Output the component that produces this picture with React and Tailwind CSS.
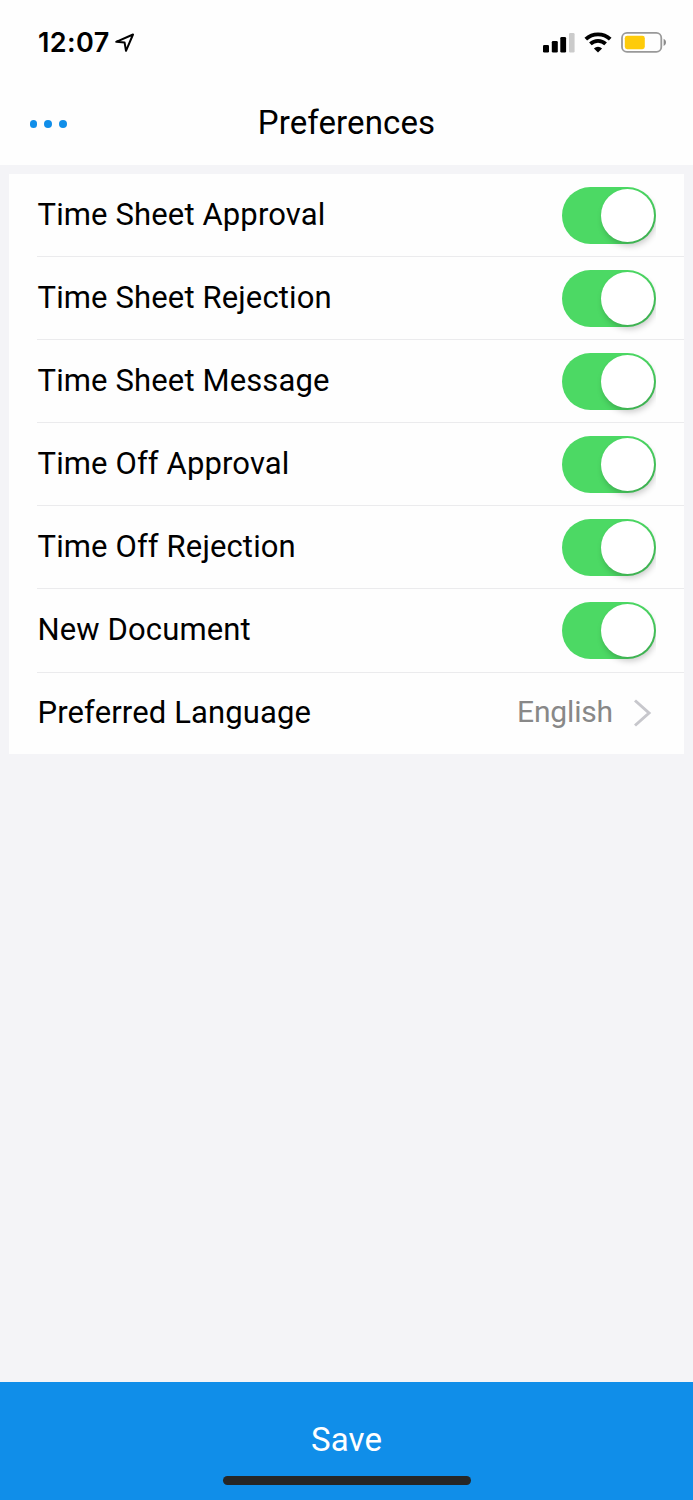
const toggles = [
  'Time Sheet Approval',
  'Time Sheet Rejection',
  'Time Sheet Message',
  'Time Off Approval',
  'Time Off Rejection',
  'New Document',
];

function StatusBar() {
  return (
    <div className="flex h-[84px] items-start justify-between pl-[38px] pr-[26px]">
      <div className="flex items-center pt-[26px]">
        <span className="w-[72px] whitespace-nowrap font-['Inter',sans-serif] text-[27px] leading-[34px] font-semibold tracking-[0.4px]">12:07</span>
        <svg className="ml-[5px]" width="21" height="21" viewBox="0 0 21 21" fill="none" stroke="#000" strokeWidth="2" strokeLinejoin="round">
          <path d="M1.2 8.8 18 1.5 11 17.8 9.6 9.6Z" />
        </svg>
      </div>
      <div className="flex items-center pt-[31px]">
        <svg width="32" height="22" viewBox="0 0 32 22">
          <rect x="0" y="14" width="6" height="7.5" rx="1.3" />
          <rect x="8.8" y="10" width="6" height="11.5" rx="1.3" />
          <rect x="17.3" y="6" width="5.8" height="15.5" rx="1.3" />
          <rect x="26" y="2" width="5.6" height="19.5" rx="1.3" fill="#cbcbcb" />
        </svg>
        <svg className="ml-[9px]" width="28" height="22" viewBox="0 0 28 22" fill="none" stroke="#000" strokeWidth="3.8">
          <path d="M1.8 8.2a17.6 17.6 0 0 1 24.4 0" />
          <path d="M6.4 12.9a11 11 0 0 1 15.2 0" />
          <path d="M14 21.6 9.9 17.4a6 6 0 0 1 8.2 0Z" fill="#000" stroke="none" />
        </svg>
        <svg className="ml-[9px]" width="46" height="22" viewBox="0 0 46 22">
          <rect x="1" y="1.9" width="39.3" height="19" rx="5" fill="none" stroke="#999" strokeWidth="1.8" />
          <rect x="3.8" y="4.8" width="20" height="13.4" rx="2.4" fill="#fecb0a" />
          <path d="M42.6 7.8c3.2 1.4 3.2 5.8 0 7.2Z" fill="#8c8c8c" />
        </svg>
      </div>
    </div>
  );
}

function Toggle() {
  return (
    <button aria-label="Toggle" className="flex h-[66px] w-[94.5px] items-start overflow-hidden">
      <span className="flex h-[57px] w-[94.5px] items-center justify-end rounded-full bg-[#4cd964] pr-[2px]">
        <span className="size-[53px] rounded-full bg-white shadow-[2px_4px_6px_rgba(0,0,0,0.21)]" />
      </span>
    </button>
  );
}

export default function App() {
  return (
    <div className="flex h-[1500px] w-[693px] flex-col bg-[#f4f4f7] font-['Roboto',sans-serif] text-black">
      <header className="h-[165px] bg-[#fefefe]">
        <StatusBar />
        <div className="grid h-[80px] grid-cols-[1fr_auto_1fr] items-center">
          <div className="flex gap-[7px] pl-[29.5px]">
            <span className="size-[7.8px] rounded-full bg-[#108ee9]" />
            <span className="size-[7.8px] rounded-full bg-[#108ee9]" />
            <span className="size-[7.8px] rounded-full bg-[#108ee9]" />
          </div>
          <h1 className="pb-[2px] text-[33px] leading-[40px] tracking-[0.1px]">Preferences</h1>
        </div>
      </header>

      <main className="mx-[9px] mt-[9px] h-[580px] bg-[#fefefe] pl-[28px]">
        {toggles.map((label) => (
          <div key={label} className="flex h-[83.1px] justify-between border-b-[1.5px] border-[#ebebed] pr-[28px]">
            <span className="pt-[21px] pl-[0.5px] text-[31px] leading-[40.5px] tracking-[0.13px]">{label}</span>
            <span className="pt-[13px]"><Toggle /></span>
          </div>
        ))}
        <div className="flex h-[81px] items-center justify-between pr-[32px]">
          <span className="pl-[0.5px] text-[31px] leading-[40px] tracking-[0.13px]">Preferred Language</span>
          <span className="flex items-center text-[#888]">
            <span className="-mt-[2px] text-[30px] leading-[40px] tracking-[-0.15px]">English</span>
            <svg className="ml-[20px]" width="19" height="28" viewBox="0 0 19 28" fill="none" stroke="#c7c7cc" strokeWidth="3">
              <path d="M2 1.5 16 14 2 26.5" />
            </svg>
          </span>
        </div>
      </main>

      <button className="mt-auto flex h-[118px] flex-col items-center bg-[#108ee9] pt-[38px]">
        <span className="text-[33px] leading-[40px] tracking-[0.1px] text-white">Save</span>
        <span className="mt-[16px] h-[9px] w-[248px] rounded-full bg-[#262626]" />
      </button>
    </div>
  );
}
